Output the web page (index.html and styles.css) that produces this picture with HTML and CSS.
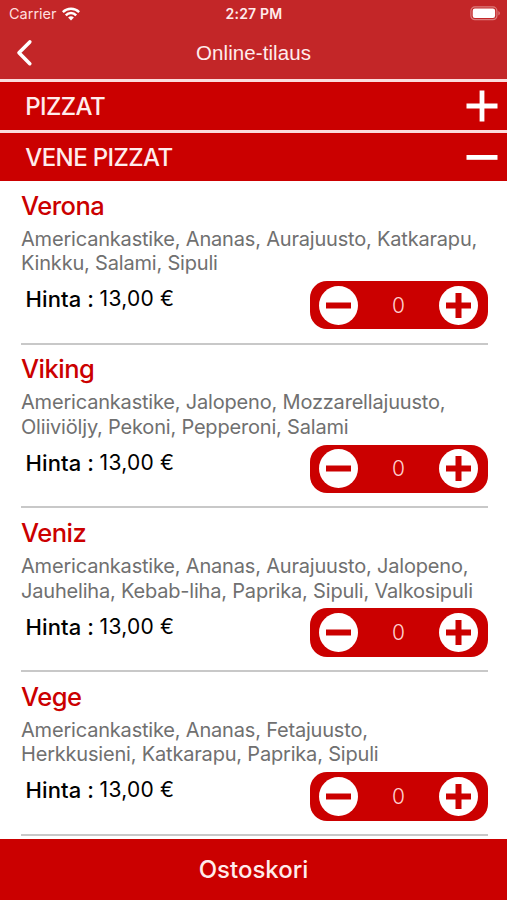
FILE: index.html
```
<!DOCTYPE html>
<html lang="fi">
<head>
<meta charset="utf-8">
<title>Online-tilaus</title>
<link rel="stylesheet" href="styles.css">
</head>
<body>
<header class="top">
  <div class="status">
    <div class="carrier"><span class="carrier-name">Carrier</span>
      <svg class="wifi" width="18" height="14" viewBox="0 0 18 14"><g fill="none" stroke="#fff" stroke-width="2.5"><path d="M.8 5.1a11.6 11.6 0 0 1 16.4 0"/><path d="M3.8 8.3a7.3 7.3 0 0 1 10.4 0"/></g><path d="M9 13.6 6.1 10.6a4.1 4.1 0 0 1 5.8 0z" fill="#fff"/></svg>
    </div>
    <span class="time">2:27 PM</span>
    <svg class="battery" width="31" height="15" viewBox="0 0 31 15"><rect x=".9" y=".9" width="26" height="12.8" rx="4" fill="none" stroke="#dc7c7c" stroke-width="1.2"/><rect x="2.7" y="2.6" width="22.4" height="9.4" rx="2.2" fill="#fff"/><path d="M28.4 5.1c2 .8 2 3.6 0 4.4z" fill="#dc7c7c"/></svg>
  </div>
  <nav class="nav">
    <svg class="back" width="17" height="28" viewBox="0 0 17 28"><path d="M13.8 2.9 3 13.8l10.8 10.9" fill="none" stroke="#fff" stroke-width="3.6" stroke-linecap="round" stroke-linejoin="round"/></svg>
    <h1 class="page-title">Online-tilaus</h1>
  </nav>
</header>
<section class="category">
  <span>PIZZAT</span>
  <svg width="32" height="32" viewBox="0 0 32 32"><path d="M.5 16h31M16 .5v31" stroke="#fff" stroke-width="4.8"/></svg>
</section>
<section class="category open">
  <span>VENE PIZZAT</span>
  <svg width="32" height="32" viewBox="0 0 32 32"><path d="M.5 16.4h31" stroke="#fff" stroke-width="4.8"/></svg>
</section>
<main class="list">
  <article class="item">
    <h2 class="name">Verona</h2>
    <p class="desc">Americankastike, Ananas, Aurajuusto, Katkarapu,<br>Kinkku, Salami, Sipuli</p>
    <div class="row"><div class="price"><span class="label">Hinta :</span><span class="amount">13,00 €</span></div>
      <div class="stepper"><svg width="39" height="39" viewBox="0 0 39 39"><circle cx="19.5" cy="19.5" r="19.5" fill="#fff"/><path d="M7 19.5h25" stroke="#cb0000" stroke-width="6"/></svg><span class="qty">0</span><svg width="39" height="39" viewBox="0 0 39 39"><circle cx="19.5" cy="19.5" r="19.5" fill="#fff"/><path d="M7 19.5h25M19.5 7v25" stroke="#cb0000" stroke-width="6"/></svg></div></div>
  </article>
  <article class="item">
    <h2 class="name">Viking</h2>
    <p class="desc">Americankastike, Jalopeno, Mozzarellajuusto,<br>Oliiviöljy, Pekoni, Pepperoni, Salami</p>
    <div class="row"><div class="price"><span class="label">Hinta :</span><span class="amount">13,00 €</span></div>
      <div class="stepper"><svg width="39" height="39" viewBox="0 0 39 39"><circle cx="19.5" cy="19.5" r="19.5" fill="#fff"/><path d="M7 19.5h25" stroke="#cb0000" stroke-width="6"/></svg><span class="qty">0</span><svg width="39" height="39" viewBox="0 0 39 39"><circle cx="19.5" cy="19.5" r="19.5" fill="#fff"/><path d="M7 19.5h25M19.5 7v25" stroke="#cb0000" stroke-width="6"/></svg></div></div>
  </article>
  <article class="item">
    <h2 class="name">Veniz</h2>
    <p class="desc">Americankastike, Ananas, Aurajuusto, Jalopeno,<br>Jauheliha, Kebab-liha, Paprika, Sipuli, Valkosipuli</p>
    <div class="row"><div class="price"><span class="label">Hinta :</span><span class="amount">13,00 €</span></div>
      <div class="stepper"><svg width="39" height="39" viewBox="0 0 39 39"><circle cx="19.5" cy="19.5" r="19.5" fill="#fff"/><path d="M7 19.5h25" stroke="#cb0000" stroke-width="6"/></svg><span class="qty">0</span><svg width="39" height="39" viewBox="0 0 39 39"><circle cx="19.5" cy="19.5" r="19.5" fill="#fff"/><path d="M7 19.5h25M19.5 7v25" stroke="#cb0000" stroke-width="6"/></svg></div></div>
  </article>
  <article class="item">
    <h2 class="name">Vege</h2>
    <p class="desc">Americankastike, Ananas, Fetajuusto,<br>Herkkusieni, Katkarapu, Paprika, Sipuli</p>
    <div class="row"><div class="price"><span class="label">Hinta :</span><span class="amount">13,00 €</span></div>
      <div class="stepper"><svg width="39" height="39" viewBox="0 0 39 39"><circle cx="19.5" cy="19.5" r="19.5" fill="#fff"/><path d="M7 19.5h25" stroke="#cb0000" stroke-width="6"/></svg><span class="qty">0</span><svg width="39" height="39" viewBox="0 0 39 39"><circle cx="19.5" cy="19.5" r="19.5" fill="#fff"/><path d="M7 19.5h25M19.5 7v25" stroke="#cb0000" stroke-width="6"/></svg></div></div>
  </article>
</main>
<footer class="cart">Ostoskori</footer>
</body>
</html>
```
FILE: styles.css
```
* { box-sizing: border-box; margin: 0; padding: 0; }
body { width: 507px; height: 900px; overflow: hidden; display: flex; flex-direction: column; background: #fff; font-family: Inter, "Liberation Sans", sans-serif; }
svg { display: block; flex: none; }
.top { height: 79px; flex: none; background: #c32628; color: #fff; }
.status { height: 27px; display: grid; grid-template-columns: 1fr auto 1fr; align-items: center; padding: 0 6px 0 9px; }
.carrier { display: flex; align-items: center; gap: 5.5px; }
.carrier-name { font-size: 14.5px; color: #ffdede; }
.time { margin-right: 2px; font-size: 14px; font-weight: 600; letter-spacing: .2px; color: #ffecec; }
.battery { justify-self: end; }
.nav { height: 52px; display: grid; grid-template-columns: 40px 1fr 40px; align-items: center; }
.back { margin-left: 15.8px; }
.page-title { text-align: center; font: 400 20.5px/28px "Liberation Sans", sans-serif; letter-spacing: .08px; color: #ffecec; }
.category { height: 48px; flex: none; margin-top: 3px; background: #cb0000; color: #ffecec; display: flex; justify-content: space-between; align-items: center; padding: 0 9px 0 25.3px; font-size: 24px; font-weight: 500; letter-spacing: -.6px; }
.top + .category, .category.open { box-shadow: 0 -3px #fbdcdc; }
.list { flex: 1; min-height: 0; overflow: hidden; padding: 0 19.5px 0 21px; }
.item { height: 163.7px; padding-top: 9.7px; border-bottom: 2px solid #c8c8c8; }
.name { font-size: 25.5px; line-height: 30px; font-weight: 500; letter-spacing: -.5px; color: #cb0000; }
.desc { margin-top: 6px; font-size: 20px; line-height: 24.5px; letter-spacing: -.19px; color: #707070; white-space: nowrap; }
.row { margin-top: 5.3px; display: flex; justify-content: space-between; }
.price { display: flex; padding: 4.4px 0 0 4.6px; line-height: 28px; color: #000; white-space: nowrap; }
.label { width: 74px; font-size: 22px; font-weight: 500; letter-spacing: .1px; }
.amount { font-size: 21px; letter-spacing: .25px; }
.stepper { width: 177.5px; height: 48.5px; border-radius: 17px; background: #cb0000; display: flex; align-items: center; justify-content: space-between; padding: 0 9px 0 8.5px; }
.qty { font-size: 21px; font-weight: 300; color: #ffd0d0; }
.cart { height: 61px; flex: none; background: #cb0000; color: #ffecec; display: flex; align-items: center; justify-content: center; font-size: 24px; font-weight: 500; }
```
